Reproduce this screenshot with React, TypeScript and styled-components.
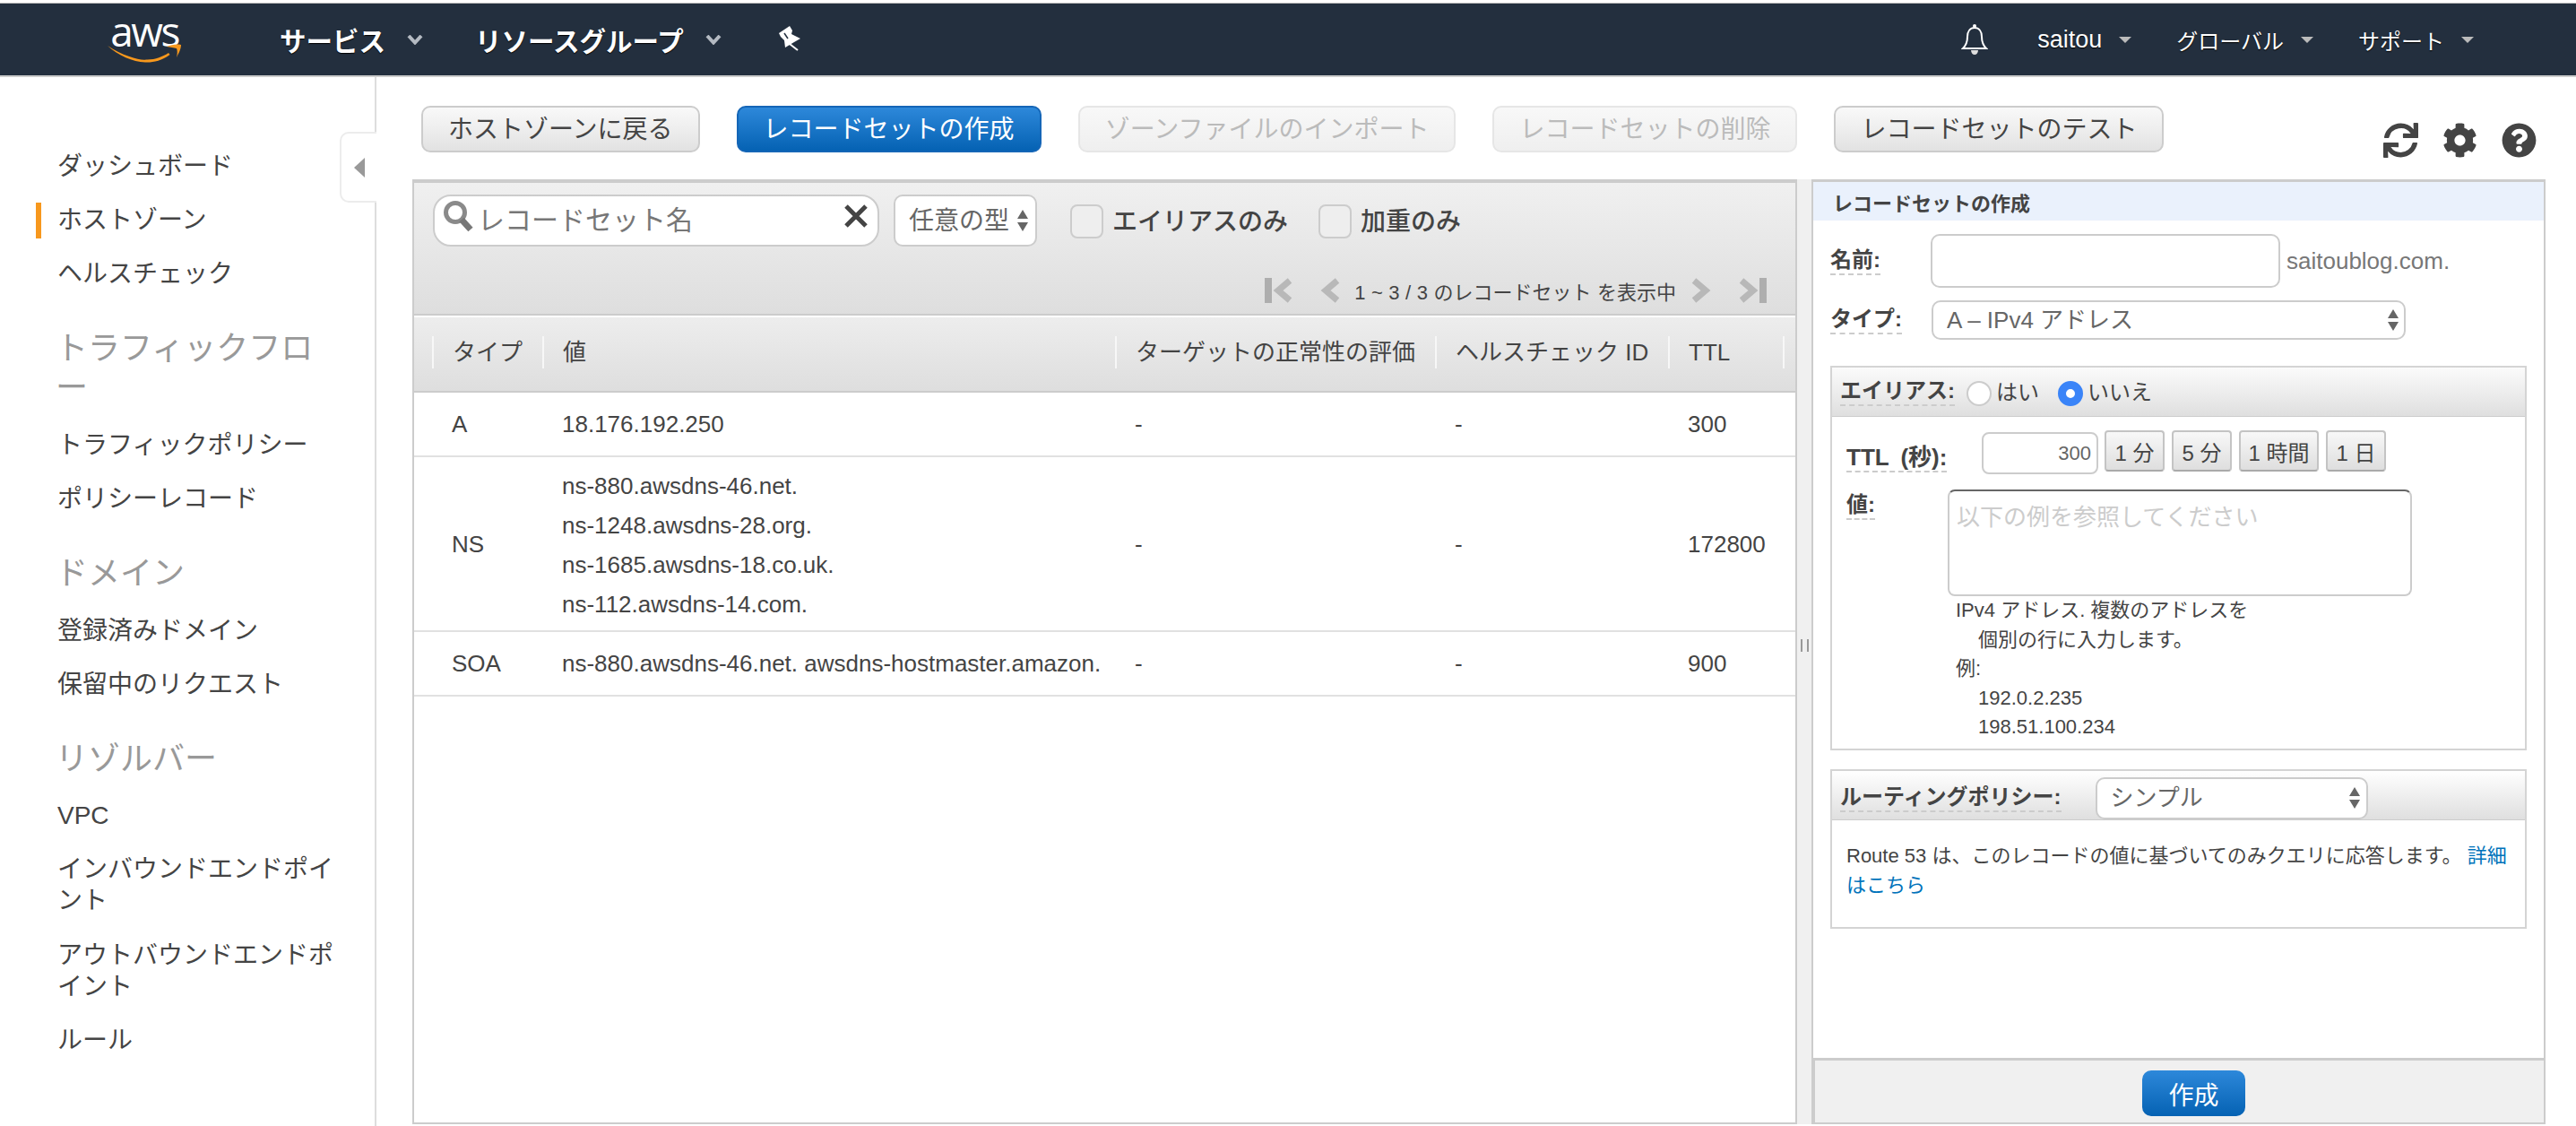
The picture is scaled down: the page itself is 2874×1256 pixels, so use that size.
import React from 'react';
import styled, { createGlobalStyle } from 'styled-components';
import { FaCog, FaQuestionCircle, FaSync } from 'react-icons/fa';

const GlobalStyle = createGlobalStyle`
  html, body {
    margin: 0;
    padding: 0;
    background: #fff;
    overflow: hidden;
  }
  * {
    box-sizing: border-box;
  }
  body, input, select, textarea, button {
    font-family: "Liberation Sans", "Noto Sans CJK JP", sans-serif;
  }
`;

const Page = styled.div`
  width: 2874px;
  height: 1256px;
  display: flex;
  flex-direction: column;
  color: #444;
  overflow: hidden;
`;

const TopBar = styled.header`
  margin-top: 3px;
  height: 83px;
  flex: none;
  display: flex;
  align-items: center;
  background: #232f3e;
  border-top: 1px solid #bbb;
  border-bottom: 2px solid #ccc;
  color: #fff;
  padding-right: 114px;
`;

const Logo = styled.div`
  width: 82px;
  height: 52px;
  margin-left: 120px;
  margin-right: 110px;
  position: relative;
  flex: none;
`;

const LogoText = styled.span`
  display: block;
  font-family: "Open Sans", sans-serif;
  font-size: 46px;
  line-height: 36px;
  letter-spacing: -2.5px;
  text-align: center;
  margin-top: -2px;
  color: #fff;
`;

const LogoSmile = styled.svg`
  position: absolute;
  left: 0;
  top: 30px;
`;

const NavMain = styled.a<{ $gap: number }>`
  font-size: 29.5px;
  font-weight: 700;
  display: flex;
  align-items: center;
  color: #fff;
  text-shadow: 0 1px 1px #000;
  margin-right: ${(p) => p.$gap}px;
`;

const NavChevron = styled.svg`
  margin-left: 24px;
`;

const Pin = styled.svg`
  margin-left: -35px;
  flex: none;
`;

const NavRight = styled.div`
  margin-left: auto;
  display: flex;
  align-items: center;
`;

const Bell = styled.svg`
  margin-right: 55px;
`;

const NavLink = styled.a<{ $big?: boolean }>`
  display: flex;
  align-items: center;
  color: #fff;
  font-size: ${(p) => (p.$big ? 27 : 24)}px;
  text-shadow: 0 1px 1px #000;
  margin-left: 50px;
  &:first-of-type {
    margin-left: 0;
  }
  &::after {
    content: '';
    margin-left: 19px;
    border-left: 7px solid transparent;
    border-right: 7px solid transparent;
    border-top: 7px solid #bbb;
  }
`;

const Content = styled.div`
  flex: 1;
  display: flex;
  min-height: 0;
`;

const Sidebar = styled.nav`
  width: 420px;
  flex: none;
  position: relative;
  border-right: 2px solid #ddd;
  padding: 82px 38px 0 64px;
`;

const SideItem = styled.a<{ $active?: boolean }>`
  display: block;
  position: relative;
  font-size: 28px;
  line-height: 35px;
  margin-bottom: 25.2px;
  color: #444;
  &::before {
    content: '';
    display: ${(p) => (p.$active ? 'block' : 'none')};
    position: absolute;
    left: -24px;
    top: -2px;
    width: 6px;
    height: 40px;
    background: #f7981d;
  }
`;

const SideHeading = styled.div`
  font-size: 36px;
  line-height: 44px;
  color: #999;
  margin: 44px 0 23.5px -2px;
`;

const CollapseTab = styled.div`
  position: absolute;
  right: -2px;
  top: 61px;
  width: 41px;
  height: 79px;
  background: #fff;
  border: 2px solid #ececec;
  border-right: none;
  border-radius: 10px 0 0 10px;
  display: flex;
  align-items: center;
  padding-left: 14px;
  &::after {
    content: '';
    border-top: 11px solid transparent;
    border-bottom: 11px solid transparent;
    border-right: 12px solid #999;
  }
`;

const Main = styled.main`
  flex: 1;
  min-width: 0;
  display: flex;
  flex-direction: column;
`;

const Toolbar = styled.div`
  flex: none;
  display: flex;
  align-items: flex-start;
  padding: 32px 44px 0 50px;
  height: 114px;
`;

const Button = styled.button<{ $primary?: boolean; $off?: boolean }>`
  height: 52px;
  font-size: 28px;
  line-height: 48px;
  border-radius: 10px;
  margin-right: 41px;
  border: 2px solid ${(p) => (p.$primary ? '#1566b7' : p.$off ? '#e6e6e6' : '#ccc')};
  color: ${(p) => (p.$primary ? '#fff' : p.$off ? '#bbb' : '#444')};
  background: ${(p) =>
    p.$primary
      ? 'linear-gradient(#2d88da, #0562b3)'
      : p.$off
        ? 'linear-gradient(#f8f8f8, #efefef)'
        : 'linear-gradient(#f9f9f9, #e2e2e2)'};
  padding: 1px 28px 0;
  white-space: nowrap;
`;

const ToolIcons = styled.div`
  margin-left: auto;
  display: flex;
  gap: 27px;
  margin-top: 19px;
  color: #444;
  font-size: 39px;
  line-height: 0;
`;

const Panels = styled.div`
  flex: 1;
  min-height: 0;
  display: flex;
  padding: 0 34px 2px 40px;
`;

const ListPanel = styled.section`
  width: 1545px;
  flex: none;
  display: flex;
  flex-direction: column;
  border: 2px solid #ccc;
  border-top-width: 4px;
`;

const ListFilters = styled.div`
  height: 148px;
  flex: none;
  background: linear-gradient(#f0f0f0, #dedede);
  border-bottom: 2px solid #ccc;
  padding: 13px 21px 0;
`;

const FilterRow = styled.div`
  display: flex;
  align-items: flex-start;
`;

const SearchBox = styled.div`
  width: 498px;
  height: 58px;
  border: 2px solid #ccc;
  border-radius: 20px;
  background: #fff;
  position: relative;
  display: flex;
  align-items: center;
  margin-right: 16px;
`;

const SearchInput = styled.input`
  border: none;
  outline: none;
  background: transparent;
  width: 390px;
  margin-left: 48px;
  padding: 0;
  font-size: 30px;
  &::placeholder {
    color: #777;
    opacity: 1;
  }
`;

const SearchGlass = styled.svg`
  position: absolute;
  left: 9px;
  top: 4px;
`;

const SearchClear = styled.svg`
  position: absolute;
  right: 10px;
  top: 9px;
`;

const SelectWrap = styled.div<{ $w: number; $h: number; $ml?: number; $mr?: number }>`
  position: relative;
  flex: none;
  width: ${(p) => p.$w}px;
  height: ${(p) => p.$h}px;
  margin-left: ${(p) => p.$ml ?? 0}px;
  margin-right: ${(p) => p.$mr ?? 0}px;
`;

const UpDown = styled.svg<{ $right: number }>`
  position: absolute;
  top: 50%;
  right: ${(p) => p.$right}px;
  transform: translateY(-50%);
  pointer-events: none;
`;

const Select = styled.select<{ $size?: number }>`
  display: block;
  appearance: none;
  width: 100%;
  height: 100%;
  background: #fff;
  border: 2px solid #ccc;
  border-radius: 10px;
  color: #666;
  font-size: ${(p) => p.$size ?? 26}px;
  padding: 0 0 0 15px;
  outline: none;
`;

const CheckLabel = styled.label`
  display: flex;
  align-items: center;
  font-size: 28px;
  font-weight: 500;
  color: #444;
  margin: 11px 34px 0 0;
  height: 38px;
`;

const CheckText = styled.span`
  margin-top: -4px;
`;

const Check = styled.input`
  appearance: none;
  width: 37px;
  height: 38px;
  margin: 0 10px 0 0;
  background: #eee;
  border: 2px solid #ccc;
  border-radius: 8px;
`;

const Pager = styled.div`
  display: flex;
  align-items: center;
  justify-content: flex-end;
  margin-top: 32px;
  padding-right: 11px;
  font-size: 22px;
  color: #444;
  height: 34px;
`;

const PagerText = styled.span`
  margin: 0 17px 0 16px;
  white-space: nowrap;
  word-spacing: 0.4px;
`;

const PagerIcon = styled.svg<{ $flip?: boolean }>`
  flex: none;
  transform: ${(p) => (p.$flip ? 'scaleX(-1)' : 'none')};
`;

const PagerGap = styled.span`
  width: 31px;
`;

const gridColumns = '21px 123px 639px 357px 260px 128px 1fr';

const HeadRow = styled.div`
  height: 84px;
  flex: none;
  margin-top: 2px;
  background: linear-gradient(#ededed, #dedede);
  border-bottom: 2px solid #ccc;
  display: grid;
  grid-template-columns: ${gridColumns};
  align-items: center;
`;

const HeadCell = styled.div`
  border-left: 2px solid #f7f7f7;
  height: 36px;
  line-height: 36px;
  padding-left: 21px;
  font-size: 26px;
  color: #444;
  white-space: nowrap;
  margin-top: -4px;
  margin-left: -1px;
`;

const DataRow = styled.div<{ $tall?: boolean }>`
  display: grid;
  grid-template-columns: ${gridColumns};
  align-items: center;
  border-bottom: 2px solid #e1e1e1;
  min-height: ${(p) => (p.$tall ? 195 : 72)}px;
  font-size: 26px;
  color: #444;
`;

const DataCell = styled.div`
  padding-left: 21px;
  line-height: 44px;
  white-space: nowrap;
`;

const ValueList = styled(DataCell)<{ $multi?: boolean }>`
  padding-top: ${(p) => (p.$multi ? 9 : 0)}px;
  padding-bottom: ${(p) => (p.$multi ? 7 : 0)}px;
`;

const Splitter = styled.div`
  width: 16px;
  flex: none;
  background: #f0f0f0;
  display: flex;
  justify-content: center;
  padding-top: 513px;
  &::after {
    content: '';
    width: 5px;
    height: 14px;
    border-left: 2px solid #999;
    border-right: 2px solid #999;
  }
`;

const CreatePanel = styled.section`
  width: 819px;
  flex: none;
  display: flex;
  flex-direction: column;
  border: 2px solid #ccc;
  border-top-width: 3px;
  border-bottom: none;
`;

const PanelTitle = styled.div`
  height: 43px;
  flex: none;
  background: #eaf1fc;
  padding-left: 22px;
  font-size: 22px;
  font-weight: 700;
  line-height: 50px;
  color: #444;
`;

const Form = styled.div`
  flex: 1;
  padding: 15px 19px 0;
`;

const FormRow = styled.div<{ $gap: number }>`
  display: flex;
  align-items: center;
  margin-bottom: ${(p) => p.$gap}px;
`;

const FieldLabel = styled.span<{ $big?: boolean }>`
  display: inline-block;
  font-size: ${(p) => (p.$big ? 26 : 24)}px;
  word-spacing: ${(p) => (p.$big ? 6 : 0)}px;
  font-weight: 700;
  line-height: 30px;
  color: #444;
  border-bottom: 2px dashed #ccc;
  white-space: nowrap;
`;

const LabelCol = styled.div<{ $width: number }>`
  width: ${(p) => p.$width}px;
  flex: none;
`;

const NameInput = styled.input`
  width: 390px;
  height: 60px;
  margin-left: -1px;
  border: 2px solid #ccc;
  border-radius: 10px;
  background: #fff;
  outline: none;
`;

const Zone = styled.span`
  font-size: 26px;
  color: #777;
  margin-left: 7px;
`;

const Box = styled.div`
  border: 2px solid #d4d4d4;
  margin-bottom: 21px;
`;

const BoxHead = styled.div`
  height: 55px;
  display: flex;
  align-items: center;
  padding-left: 9px;
  background: linear-gradient(#fbfbfb, #dfdfdf);
  border-bottom: 1px solid #ccc;
`;

const RouteHead = styled(BoxHead)`
  align-items: flex-end;
  background: linear-gradient(#fff, #dfdfdf);
`;

const RadioLabel = styled.label`
  display: flex;
  align-items: center;
  font-size: 24px;
  color: #444;
  margin-left: 13px;
  margin-right: 8px;
`;

const RadioText = styled.span`
  margin-top: -4px;
`;

const Radio = styled.input`
  appearance: none;
  width: 28px;
  height: 28px;
  margin: 4px 5px 0 0;
  border-radius: 50%;
  background: #fff;
  border: 2px solid #ccc;
  &:checked {
    border: 9px solid #3a84f8;
  }
`;

const AliasBody = styled.div`
  padding: 15px 16px 7px;
`;

const TtlRow = styled.div`
  display: flex;
  align-items: flex-start;
  height: 66px;
`;

const TtlLabelCol = styled(LabelCol)`
  padding-top: 15px;
`;

const TtlInput = styled.input`
  width: 130px;
  height: 47px;
  margin-top: 2px;
  border: 2px solid #ccc;
  border-radius: 8px;
  text-align: right;
  font-size: 22px;
  color: #666;
  padding: 0 6px 0 0;
  margin-right: 7px;
  outline: none;
`;

const TtlButton = styled.button<{ $wide?: boolean }>`
  width: ${(p) => (p.$wide ? 89 : 67)}px;
  height: 46px;
  padding: 0;
  font-size: 24px;
  color: #444;
  margin-right: 8px;
  border: 2px solid #c4c4c4;
  border-bottom-color: #aaa;
  border-radius: 4px;
  background: linear-gradient(#f8f8f8, #dedede);
`;

const ValueRow = styled.div`
  display: flex;
  align-items: flex-start;
`;

const ValueLabelCol = styled(LabelCol)`
  padding-top: 2px;
`;

const ValueArea = styled.textarea`
  display: block;
  width: 518px;
  height: 119px;
  resize: none;
  border: 2px solid #ccc;
  border-top-color: #666;
  border-radius: 8px;
  padding: 8px 8px;
  font-size: 26px;
  outline: none;
  &::placeholder {
    color: #ccc;
    opacity: 1;
  }
`;

const HelpText = styled.div`
  padding-left: 122px;
  font-size: 22px;
  line-height: 32.6px;
  color: #444;
`;

const HelpIndent = styled.div`
  padding-left: 25px;
`;

const RouteLabel = styled.div`
  margin-bottom: 8px;
`;

const RouteBody = styled.div`
  padding: 23px 14px 30px 16px;
  font-size: 22px;
  line-height: 33px;
  color: #444;
`;

const Link = styled.a`
  color: #0073bb;
`;

const PanelFooter = styled.div`
  height: 74px;
  flex: none;
  background: #f0f0f0;
  border-top: 3px solid #ccc;
  border-bottom: 2px solid #ccc;
  border-left: 2px solid #ccc;
  display: flex;
  justify-content: center;
  padding-top: 11px;
`;

const CreateButton = styled.button`
  width: 115px;
  height: 51px;
  padding: 0;
  margin-left: 32px;
  font-size: 28px;
  color: #fff;
  border: none;
  border-radius: 10px;
  background: linear-gradient(#2d88da, #0562b3);
`;

const Arrows = ({ right }: { right: number }) => (
  <UpDown $right={right} width="12" height="24" viewBox="0 0 12 24">
    <path d="M6 0 L12 10 L0 10 Z M6 24 L0 14 L12 14 Z" fill="#666" />
  </UpDown>
);

const Chevron = () => (
  <NavChevron width="18" height="11" viewBox="0 0 18 11">
    <path d="M2 1 L9 8.5 L16 1" fill="none" stroke="#b4bac2" strokeWidth="4" />
  </NavChevron>
);

const PageIcon = ({ flip, end }: { flip?: boolean; end?: boolean }) => {
  const w = end ? 31 : 22;
  return (
    <PagerIcon $flip={flip} width={w} height="28" viewBox={`0 0 ${w} 28`}>
      {end && <rect x="0" y="0" width="8" height="28" fill="#aeaeae" />}
      <path d={`M${w - 3} 3 L${w - 16} 14 L${w - 3} 25`} fill="none" stroke="#b8b8b8" strokeWidth="7" />
    </PagerIcon>
  );
};

const nsValues = [
  'ns-880.awsdns-46.net.',
  'ns-1248.awsdns-28.org.',
  'ns-1685.awsdns-18.co.uk.',
  'ns-112.awsdns-14.com.',
];

const records = [
  { type: 'A', values: ['18.176.192.250'], ttl: '300' },
  { type: 'NS', values: nsValues, ttl: '172800' },
  { type: 'SOA', values: ['ns-880.awsdns-46.net. awsdns-hostmaster.amazon.'], ttl: '900' },
];

const columns = ['タイプ', '値', 'ターゲットの正常性の評価', 'ヘルスチェック ID', 'TTL'];

const App = () => {
  return (
    <Page>
      <GlobalStyle />
      <TopBar>
        <Logo>
          <LogoText>aws</LogoText>
          <LogoSmile width="82" height="22" viewBox="0 0 82 22">
            <path d="M0 3 C18 15 38 20 43 18.5 C52 19 62 15 68 11 L69.5 13 C60 20 50 22 42 21.5 C28 21 12 14 0 3 Z" fill="#f7981d" />
            <path d="M66 4 C71 2 77 1 82 2 C82 7 79 12 77 16 C78 12 78 8 77 6 C74 5 70 5 66 4 Z" fill="#f7981d" />
          </LogoSmile>
        </Logo>
        <NavMain $gap={58}>サービス<Chevron /></NavMain>
        <NavMain $gap={80}>リソースグループ<Chevron /></NavMain>
        <Pin width="60" height="50" viewBox="0 0 60 50">
          <path d="M19 18 L31 10 L34 15 L33 19 L43 24 L36 28 L26 34 L25 26 L21 22 Z" fill="#fff" />
          <path d="M31 30 L40 37" stroke="#fff" strokeWidth="2" />
          <path d="M25 18 L29 24" stroke="#232f3e" strokeWidth="1.5" />
        </Pin>
        <NavRight>
          <Bell width="30" height="36" viewBox="16 6 30 36">
            <circle cx="31" cy="9" r="2" fill="#fff" />
            <path d="M18 34 C21 31 23 27 23 21 C23 15 26 11 31 11 C36 11 39 15 39 21 C39 27 41 31 44 34 Z" fill="none" stroke="#fff" strokeWidth="2" />
            <path d="M27 36 H35 C35 39 33 41 31 41 C29 41 27 39 27 36 Z" fill="#ddd" />
          </Bell>
          <NavLink $big>saitou</NavLink>
          <NavLink>グローバル</NavLink>
          <NavLink>サポート</NavLink>
        </NavRight>
      </TopBar>
      <Content>
        <Sidebar>
          <CollapseTab />
          <SideItem>ダッシュボード</SideItem>
          <SideItem $active>ホストゾーン</SideItem>
          <SideItem>ヘルスチェック</SideItem>
          <SideHeading>トラフィックフロー</SideHeading>
          <SideItem>トラフィックポリシー</SideItem>
          <SideItem>ポリシーレコード</SideItem>
          <SideHeading>ドメイン</SideHeading>
          <SideItem>登録済みドメイン</SideItem>
          <SideItem>保留中のリクエスト</SideItem>
          <SideHeading>リゾルバー</SideHeading>
          <SideItem>VPC</SideItem>
          <SideItem>インバウンドエンドポイント</SideItem>
          <SideItem>アウトバウンドエンドポイント</SideItem>
          <SideItem>ルール</SideItem>
        </Sidebar>
        <Main>
          <Toolbar>
            <Button>ホストゾーンに戻る</Button>
            <Button $primary>レコードセットの作成</Button>
            <Button $off>ゾーンファイルのインポート</Button>
            <Button $off>レコードセットの削除</Button>
            <Button>レコードセットのテスト</Button>
            <ToolIcons>
              <FaSync />
              <FaCog />
              <FaQuestionCircle />
            </ToolIcons>
          </Toolbar>
          <Panels>
            <ListPanel>
              <ListFilters>
                <FilterRow>
                  <SearchBox>
                    <SearchGlass width="36" height="38" viewBox="0 0 36 38">
                      <circle cx="14" cy="14" r="10.5" fill="none" stroke="#8a8a8a" strokeWidth="5" />
                      <path d="M21 22 L31 33" stroke="#777" strokeWidth="7" />
                    </SearchGlass>
                    <SearchInput placeholder="レコードセット名" />
                    <SearchClear width="28" height="26" viewBox="0 0 28 26">
                      <path d="M3 2 L25 24 M25 2 L3 24" stroke="#444" strokeWidth="5" />
                    </SearchClear>
                  </SearchBox>
                  <SelectWrap $w={160} $h={58} $mr={37}>
                    <Select $size={28} defaultValue="any">
                      <option value="any">任意の型</option>
                    </Select>
                    <Arrows right={10} />
                  </SelectWrap>
                  <CheckLabel>
                    <Check type="checkbox" />
                    <CheckText>エイリアスのみ</CheckText>
                  </CheckLabel>
                  <CheckLabel>
                    <Check type="checkbox" />
                    <CheckText>加重のみ</CheckText>
                  </CheckLabel>
                </FilterRow>
                <Pager>
                  <PageIcon end />
                  <PagerGap />
                  <PageIcon />
                  <PagerText>1 ~ 3 / 3 のレコードセット を表示中</PagerText>
                  <PageIcon flip />
                  <PagerGap />
                  <PageIcon flip end />
                </Pager>
              </ListFilters>
              <HeadRow>
                <span />
                {columns.map((c) => (
                  <HeadCell key={c}>{c}</HeadCell>
                ))}
                <HeadCell />
              </HeadRow>
              {records.map((r) => (
                <DataRow key={r.type} $tall={r.values.length > 1}>
                  <span />
                  <DataCell>{r.type}</DataCell>
                  <ValueList $multi={r.values.length > 1}>
                    {r.values.map((v) => (
                      <div key={v}>{v}</div>
                    ))}
                  </ValueList>
                  <DataCell>-</DataCell>
                  <DataCell>-</DataCell>
                  <DataCell>{r.ttl}</DataCell>
                </DataRow>
              ))}
            </ListPanel>
            <Splitter />
            <CreatePanel>
              <PanelTitle>レコードセットの作成</PanelTitle>
              <Form>
                <FormRow $gap={14}>
                  <LabelCol $width={113}><FieldLabel>名前:</FieldLabel></LabelCol>
                  <NameInput />
                  <Zone>saitoublog.com.</Zone>
                </FormRow>
                <FormRow $gap={29}>
                  <LabelCol $width={113}><FieldLabel>タイプ:</FieldLabel></LabelCol>
                  <SelectWrap $w={529} $h={44}>
                    <Select defaultValue="a">
                      <option value="a">A – IPv4 アドレス</option>
                    </Select>
                    <Arrows right={8} />
                  </SelectWrap>
                </FormRow>
                <Box>
                  <BoxHead>
                    <FieldLabel>エイリアス:</FieldLabel>
                    <RadioLabel><Radio type="radio" name="alias" /><RadioText>はい</RadioText></RadioLabel>
                    <RadioLabel><Radio type="radio" name="alias" defaultChecked /><RadioText>いいえ</RadioText></RadioLabel>
                  </BoxHead>
                  <AliasBody>
                    <TtlRow>
                      <TtlLabelCol $width={151}><FieldLabel $big>TTL (秒):</FieldLabel></TtlLabelCol>
                      <TtlInput defaultValue="300" />
                      <TtlButton>1 分</TtlButton>
                      <TtlButton>5 分</TtlButton>
                      <TtlButton $wide>1 時間</TtlButton>
                      <TtlButton>1 日</TtlButton>
                    </TtlRow>
                    <ValueRow>
                      <ValueLabelCol $width={113}><FieldLabel>値:</FieldLabel></ValueLabelCol>
                      <ValueArea placeholder="以下の例を参照してください" />
                    </ValueRow>
                    <HelpText>
                      <div>IPv4 アドレス. 複数のアドレスを</div>
                      <HelpIndent>個別の行に入力します。</HelpIndent>
                      <div>例:</div>
                      <HelpIndent>192.0.2.235</HelpIndent>
                      <HelpIndent>198.51.100.234</HelpIndent>
                    </HelpText>
                  </AliasBody>
                </Box>
                <Box>
                  <RouteHead>
                    <RouteLabel><FieldLabel>ルーティングポリシー:</FieldLabel></RouteLabel>
                    <SelectWrap $w={304} $h={47} $ml={38}>
                      <Select defaultValue="simple">
                        <option value="simple">シンプル</option>
                      </Select>
                      <Arrows right={9} />
                    </SelectWrap>
                  </RouteHead>
                  <RouteBody>
                    Route 53 は、このレコードの値に基づいてのみクエリに応答します。 <Link>詳細はこちら</Link>
                  </RouteBody>
                </Box>
              </Form>
              <PanelFooter>
                <CreateButton>作成</CreateButton>
              </PanelFooter>
            </CreatePanel>
          </Panels>
        </Main>
      </Content>
    </Page>
  );
};

export default App;
